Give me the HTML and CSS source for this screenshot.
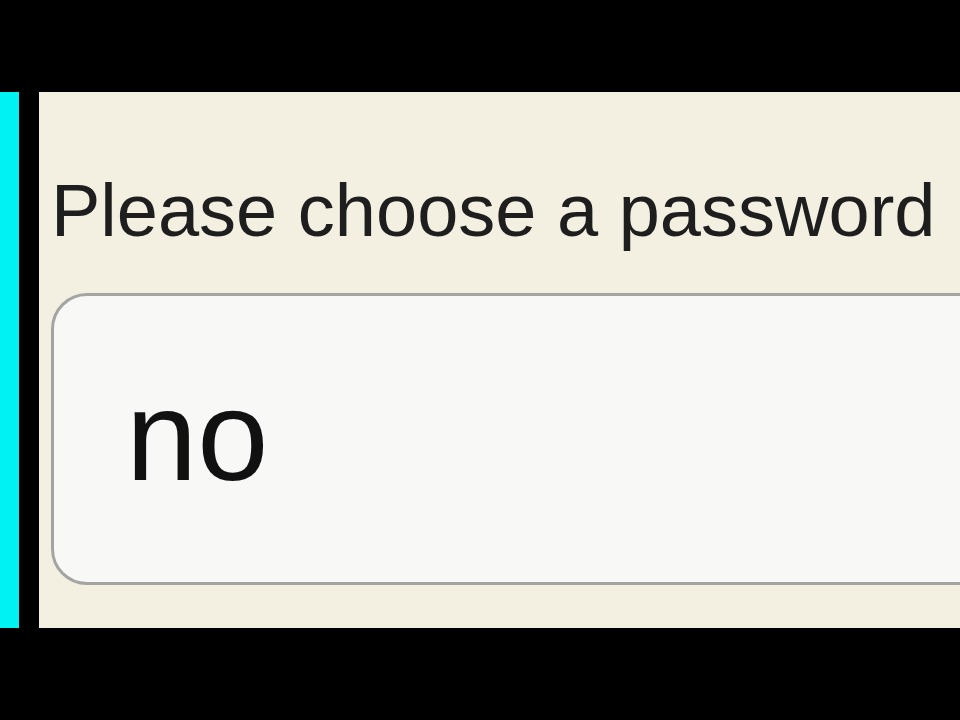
FILE: index.html
```html
<!DOCTYPE html>
<html lang="en">
<head>
    <meta charset="UTF-8">
    <title>Choose a password</title>
    <link rel="stylesheet" href="styles.css">
</head>
<body>
    <div class="frame">
        <div class="accent"></div>
        <div class="panel">
            <label class="prompt" for="password">Please choose a password</label>
            <input class="field" type="text" id="password" value="no">
        </div>
    </div>
</body>
</html>
```

FILE: styles.css
```css
* {
    margin: 0;
    padding: 0;
    box-sizing: border-box;
}

body {
    background: #000;
    width: 960px;
    height: 720px;
    overflow: hidden;
    font-family: "Liberation Sans", Arial, sans-serif;
}

.frame {
    display: flex;
    gap: 20px;
    margin-top: 92px;
    height: 536px;
}

.accent {
    width: 19px;
    background: #00f2f2;
}

.panel {
    flex: 1;
    background: #f3f0e2;
    padding: 76px 0 0 12px;
    overflow: hidden;
    display: flex;
    flex-direction: column;
    align-items: flex-start;
}

.prompt {
    display: block;
    font-size: 74px;
    line-height: 85px;
    color: #1e1e1e;
    white-space: nowrap;
    margin-bottom: 40px;
}

.field {
    width: 1000px;
    height: 292px;
    flex-shrink: 0;
    border: 3px solid #a4a4a2;
    border-radius: 36px;
    background: #f8f8f7;
    padding: 0 0 8px 72px;
    font-family: "Liberation Sans", Arial, sans-serif;
    font-size: 128px;
    color: #111;
    outline: none;
}
```
